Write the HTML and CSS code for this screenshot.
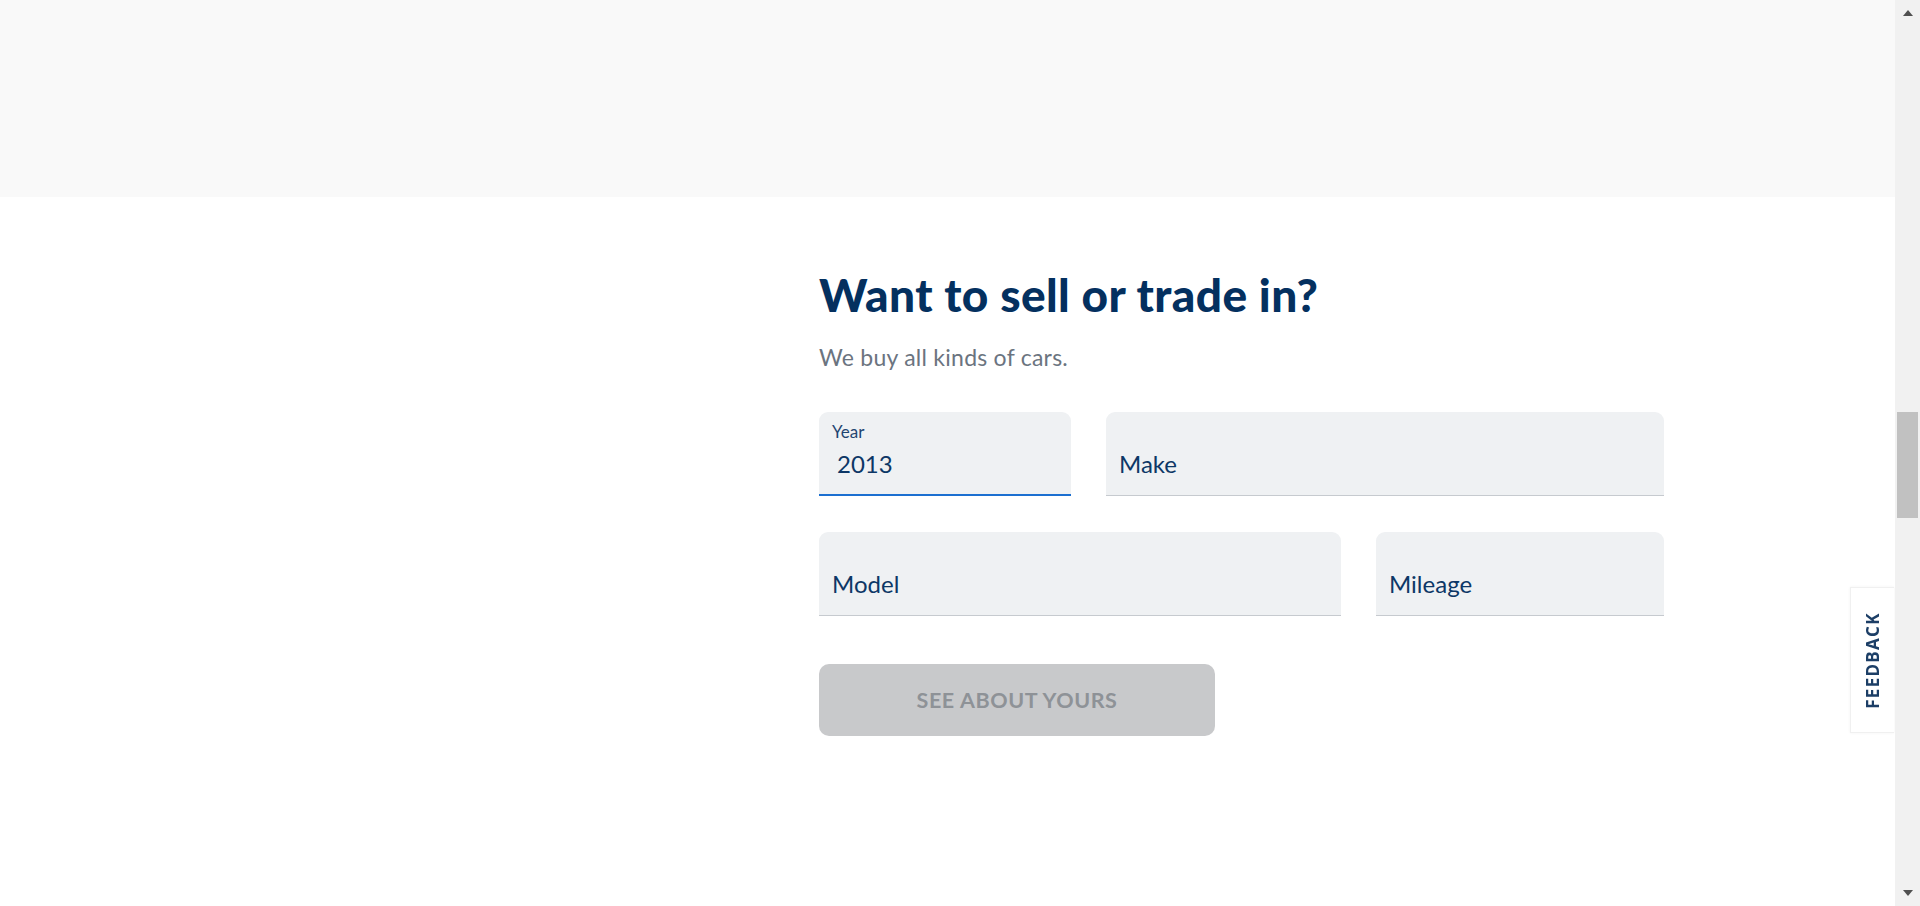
FILE: index.html
```html
<!DOCTYPE html>
<html lang="en">
<head>
<meta charset="utf-8">
<title>Want to sell or trade in?</title>
<link rel="stylesheet" href="styles.css">
</head>
<body>
<div class="page">
  <div class="hero"></div>
  <section class="sell">
    <h2 class="sell__title">Want to sell or trade in?</h2>
    <p class="sell__sub">We buy all kinds of cars.</p>
    <form class="form">
      <div class="form__row">
        <div class="field field--year field--active">
          <span class="field__label">Year</span>
          <span class="field__value">2013</span>
        </div>
        <div class="field field--make">
          <span class="field__placeholder">Make</span>
        </div>
      </div>
      <div class="form__row">
        <div class="field field--model">
          <span class="field__placeholder">Model</span>
        </div>
        <div class="field field--mileage">
          <span class="field__placeholder">Mileage</span>
        </div>
      </div>
      <button type="button" class="cta">SEE ABOUT YOURS</button>
    </form>
  </section>
</div>
<div class="feedback"><span class="feedback__text">FEEDBACK</span></div>
<div class="scrollbar">
  <span class="scrollbar__arrow scrollbar__arrow--up"></span>
  <div class="scrollbar__track"><div class="scrollbar__thumb"></div></div>
  <span class="scrollbar__arrow scrollbar__arrow--down"></span>
</div>
</body>
</html>
```

FILE: styles.css
```css
html, body {
  margin: 0;
  padding: 0;
  height: 100%;
  overflow: hidden;
  background: #ffffff;
}

body {
  font-family: "Lato", "Liberation Sans", sans-serif;
}

.page {
  width: 1905px;
}

.hero {
  height: 197px;
  background: #f9f9f9;
}

.sell {
  padding: 71px 0 0 819px;
}

.sell__title {
  margin: 0;
  font-family: "Lato", sans-serif;
  font-weight: 900;
  font-size: 46px;
  line-height: 54px;
  letter-spacing: 0.4px;
  color: #04305f;
}

.sell__sub {
  margin: 21px 0 0;
  font-size: 23px;
  line-height: 28px;
  letter-spacing: 0.25px;
  color: #6b7480;
}

.form {
  margin-top: 41px;
  width: 845px;
  display: flex;
  flex-direction: column;
  gap: 36px;
}

.form__row {
  display: flex;
  gap: 35px;
}

.field {
  box-sizing: border-box;
  height: 84px;
  padding: 38px 13px 0;
  background: #eff1f3;
  border-radius: 9px 9px 0 0;
  border-bottom: 1px solid #c6cacf;
  color: #0d3766;
  font-size: 24px;
  line-height: 28px;
}

.field--active {
  padding-top: 10px;
  border-bottom: 2px solid #1b6fd0;
}

.field--year { width: 252px; }
.field--make { width: 558px; }
.field--model { width: 522px; }
.field--mileage { width: 288px; }

.field__label {
  display: block;
  font-size: 17px;
  line-height: 20px;
  color: #1f4571;
}

.field__value {
  display: block;
  margin: 8px 0 0 5px;
}

.field__placeholder {
  display: block;
}

.cta {
  display: block;
  margin-top: 12px;
  width: 396px;
  height: 72px;
  border: 0;
  border-radius: 10px;
  background: #c8c9cb;
  color: #8e9297;
  font-family: "Lato", sans-serif;
  font-weight: 700;
  font-size: 21.5px;
  letter-spacing: 0.6px;
  padding: 0;
}

.feedback {
  position: fixed;
  top: 587px;
  right: 26px;
  width: 44px;
  height: 146px;
  box-sizing: border-box;
  background: #ffffff;
  border: 1px solid #f0f0f0;
  border-right: 0;
  box-shadow: 0 0 3px rgba(0, 0, 0, 0.05);
  display: flex;
  align-items: center;
  justify-content: center;
}

.feedback__text {
  display: block;
  transform: rotate(-90deg);
  font-family: "Open Sans", sans-serif;
  font-weight: 700;
  font-size: 17px;
  letter-spacing: 1.3px;
  color: #1c3e66;
  white-space: nowrap;
}

.scrollbar {
  position: fixed;
  top: 0;
  right: 0;
  width: 25px;
  height: 100%;
  background: #f1f1f1;
  display: flex;
  flex-direction: column;
  align-items: center;
}

.scrollbar__arrow {
  display: block;
  width: 0;
  height: 0;
  border-left: 5.5px solid transparent;
  border-right: 5.5px solid transparent;
}

.scrollbar__arrow--up {
  margin-top: 10px;
  border-bottom: 6px solid #505050;
}

.scrollbar__arrow--down {
  margin-bottom: 10px;
  border-top: 6px solid #505050;
}

.scrollbar__track {
  flex: 1;
  width: 100%;
  padding-top: 396px;
  box-sizing: border-box;
}

.scrollbar__thumb {
  margin-left: 2px;
  width: 21px;
  height: 106px;
  background: #c1c1c1;
}
```
